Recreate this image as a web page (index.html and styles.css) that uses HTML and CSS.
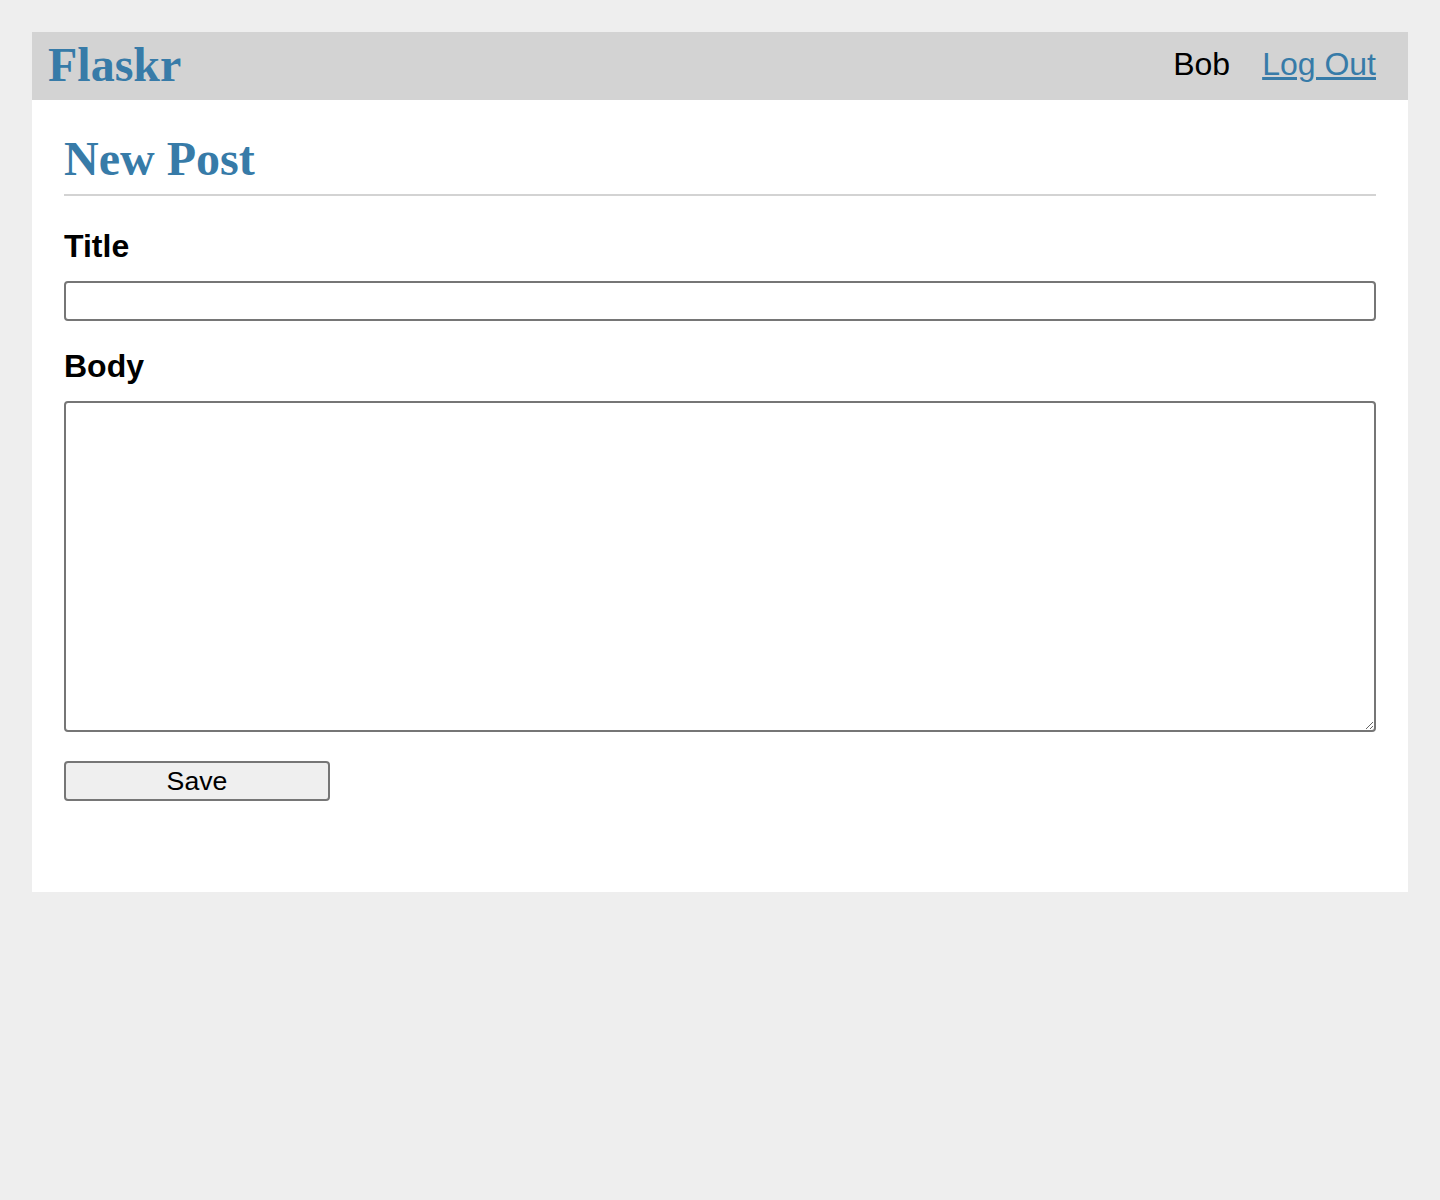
FILE: index.html
```html
<!DOCTYPE html>
<html>
<head>
<meta charset="utf-8">
<title>New Post - Flaskr</title>
<link rel="stylesheet" href="styles.css">
</head>
<body>
<nav class="topnav">
  <h1 class="brand"><a href="#">Flaskr</a></h1>
  <ul class="navlist">
    <li><span class="navitem">Bob</span></li>
    <li><a class="navitem" href="#">Log Out</a></li>
  </ul>
</nav>
<section class="content">
  <header class="page-header">
    <h1 class="page-title">New Post</h1>
  </header>
  <form class="post-form">
    <label class="field-label" for="title">Title</label>
    <input class="field-input" name="title" id="title">
    <label class="field-label" for="body">Body</label>
    <textarea class="field-textarea" name="body" id="body"></textarea>
    <input class="save-btn" type="submit" value="Save">
  </form>
</section>
</body>
</html>
```

FILE: styles.css
```css
html {
  font-family: "Liberation Sans", Arial, sans-serif;
  background: #eee;
  padding: 32px;
}

body {
  margin: 0;
  background: #fff;
}

a {
  color: #377ba8;
}

.topnav {
  background: #d3d3d3;
  display: flex;
  align-items: center;
  padding: 0 16px;
  height: 68px;
}

.brand {
  flex: auto;
  margin: 0 0 4px 0;
  font-family: "Liberation Serif", "Times New Roman", serif;
  font-size: 48px;
  font-weight: bold;
  line-height: 55px;
  color: #377ba8;
}

.brand a {
  text-decoration: none;
}

.navlist {
  display: flex;
  list-style: none;
  margin: 0;
  padding: 0;
}

.navitem {
  display: block;
  padding: 14px 16px 18px;
  font-size: 32px;
  line-height: 36px;
}

.content {
  padding: 0 32px 32px;
}

.page-header {
  border-bottom: 2px solid #d3d3d3;
  display: flex;
  align-items: flex-end;
}

.page-title {
  flex: auto;
  margin: 32px 0 8px 0;
  font-family: "Liberation Serif", "Times New Roman", serif;
  font-size: 48px;
  line-height: 54px;
  color: #377ba8;
}

.post-form {
  margin: 32px 0;
  display: flex;
  flex-direction: column;
}

.field-label {
  font-weight: bold;
  font-size: 32px;
  line-height: 36px;
  margin-bottom: 17px;
}

.field-input,
.field-textarea {
  box-sizing: border-box;
  border: 2px solid #767676;
  border-radius: 4px;
  font-family: "Liberation Sans", Arial, sans-serif;
  font-size: 26.67px;
  padding: 2px 4px;
  margin: 0 0 27px 0;
  background: #fff;
}

.field-input {
  height: 40px;
}

.field-textarea {
  height: 331px;
  resize: vertical;
  margin-bottom: 29px;
}

.save-btn {
  align-self: start;
  box-sizing: border-box;
  width: 266px;
  height: 40px;
  margin: 0 0 27px 0;
  border: 2px solid #767676;
  border-radius: 4px;
  background: #efefef;
  color: #000;
  font-family: "Liberation Sans", Arial, sans-serif;
  font-size: 26.67px;
  padding: 0;
}
```
